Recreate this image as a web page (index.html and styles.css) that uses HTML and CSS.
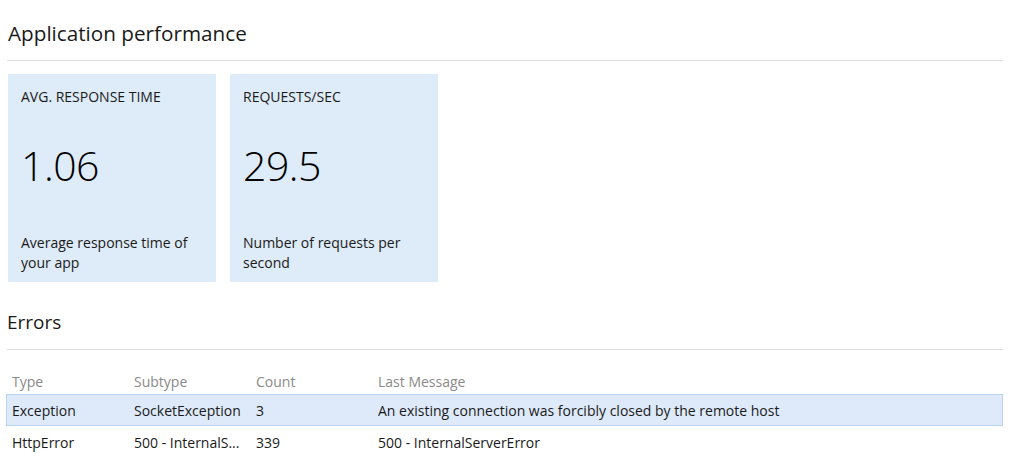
FILE: index.html
```html
<!DOCTYPE html>
<html>
<head>
<meta charset="utf-8">
<link rel="stylesheet" href="styles.css">
</head>
<body>
<div class="page">
  <section class="section">
    <h1 class="title">Application performance</h1>
    <div class="rule"></div>
    <div class="cards">
      <div class="card">
        <div class="card-label">AVG. RESPONSE TIME</div>
        <div class="card-value">1.06</div>
        <div class="card-desc">Average response time of your app</div>
      </div>
      <div class="card">
        <div class="card-label">REQUESTS/SEC</div>
        <div class="card-value">29.5</div>
        <div class="card-desc">Number of requests per second</div>
      </div>
    </div>
  </section>
  <section class="section errors">
    <h2 class="subtitle">Errors</h2>
    <div class="rule"></div>
    <div class="table">
      <div class="row head">
        <div class="cell">Type</div>
        <div class="cell">Subtype</div>
        <div class="cell">Count</div>
        <div class="cell">Last Message</div>
      </div>
      <div class="row selected">
        <div class="cell">Exception</div>
        <div class="cell">SocketException</div>
        <div class="cell">3</div>
        <div class="cell">An existing connection was forcibly closed by the remote host</div>
      </div>
      <div class="row">
        <div class="cell">HttpError</div>
        <div class="cell">500 - InternalS...</div>
        <div class="cell">339</div>
        <div class="cell">500 - InternalServerError</div>
      </div>
    </div>
  </section>
</div>
</body>
</html>
```

FILE: styles.css
```css
html, body {
  margin: 0;
  padding: 0;
  background: #ffffff;
}
body {
  font-family: "Open Sans", "Noto Sans", sans-serif;
  color: #111111;
}
.page {
  width: 996px;
  padding-left: 7px;
  padding-top: 19px;
}
.title {
  margin: 0 0 0 1px;
  font-size: 20.7px;
  font-weight: 400;
  line-height: 28px;
  height: 28px;
  color: #1a1a1a;
}
.rule {
  height: 1px;
  background: #dcdcdc;
  margin-top: 13px;
}
.cards {
  display: flex;
  gap: 14px;
  margin-top: 13px;
  margin-left: 1px;
}
.card {
  width: 208px;
  height: 208px;
  box-sizing: border-box;
  background: #deebf8;
  padding: 13px 13px 0 13px;
  display: flex;
  flex-direction: column;
}
.card-label {
  font-size: 14px;
  line-height: 20px;
  color: #1a1a1a;
}
.card-value {
  font-size: 41px;
  font-weight: 300;
  line-height: 52px;
  margin-top: 32px;
  color: #000000;
  letter-spacing: -0.5px;
}
.card-desc {
  font-size: 14px;
  line-height: 20px;
  margin-top: 42px;
  color: #1a1a1a;
}
.errors {
  margin-top: 27px;
}
.subtitle {
  margin: 0;
  font-size: 19px;
  font-weight: 400;
  line-height: 26px;
  height: 26px;
  color: #1a1a1a;
}
.errors .rule {
  margin-top: 14px;
}
.table {
  margin-top: 20px;
  margin-left: -1px;
}
.row {
  display: grid;
  grid-template-columns: 122px 122px 122px 1fr;
  padding-left: 5px;
  height: 32px;
  box-sizing: border-box;
  align-items: center;
  font-size: 14px;
  color: #1a1a1a;
  border: 1px solid transparent;
}
.row.head {
  height: 24px;
  padding-bottom: 1px;
  color: #8a8a8a;
}
.row.selected {
  background: #deeafa;
  border-color: #b8d2f0;
}
.cell {
  white-space: nowrap;
  overflow: hidden;
}
```
